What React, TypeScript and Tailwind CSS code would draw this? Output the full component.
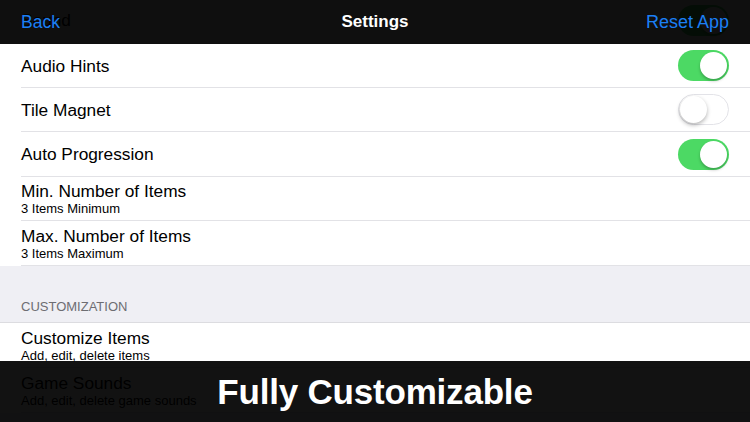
import React from "react";

type RowProps = {
  title: string;
  subtitle?: string;
  toggle?: boolean | null;
  h: string;
};

function Toggle({ on }: { on: boolean }) {
  return on ? (
    <div className="relative w-[51px] h-[31px] rounded-full bg-[#4cd964]">
      <div className="absolute right-[2px] top-[2px] w-[27px] h-[27px] rounded-full bg-white shadow-[0_2px_3px_rgba(0,0,0,0.25)]" />
    </div>
  ) : (
    <div className="relative w-[51px] h-[31px] rounded-full bg-white border-[1.5px] border-[#e3e3e8]">
      <div className="absolute left-[0.5px] top-[0.5px] w-[27px] h-[27px] rounded-full bg-white shadow-[0_2px_4px_rgba(0,0,0,0.3)]" />
    </div>
  );
}

function Row({ title, subtitle, toggle, h }: RowProps) {
  return (
    <div className={`bg-white pl-[21px] ${h}`}>
      <div className="h-full flex items-center pr-[21px] border-b border-[#e2e2e6]">
        <div className="flex-1 flex flex-col">
          <span className="text-[17.3px] leading-[20px] text-black">{title}</span>
          {subtitle && <span className="text-[13px] leading-[15px] text-black">{subtitle}</span>}
        </div>
        {toggle !== undefined && toggle !== null && <Toggle on={toggle} />}
      </div>
    </div>
  );
}

export default function App() {
  return (
    <div
      className="relative w-[750px] h-[422px] overflow-hidden bg-[#efeff4]"
      style={{ fontFamily: '"Liberation Sans", Arial, sans-serif' }}
    >
      <div className="flex flex-col -mt-[3px]">
        <Row title="Sound" toggle={true} h="h-[47px]" />
        <Row title="Audio Hints" toggle={true} h="h-[44px]" />
        <Row title="Tile Magnet" toggle={false} h="h-[44px]" />
        <Row title="Auto Progression" toggle={true} h="h-[45px]" />
        <Row title="Min. Number of Items" subtitle="3 Items Minimum" h="h-[44px]" />
        <Row title="Max. Number of Items" subtitle="3 Items Maximum" h="h-[45px]" />

        <div className="h-[57px] border-b border-[#dcdce0] flex items-end pl-[21px] pb-[7px]">
          <span className="text-[13px] text-[#6d6d72] leading-[16px]">CUSTOMIZATION</span>
        </div>

        <Row title="Customize Items" subtitle="Add, edit, delete items" h="h-[45px]" />
        <Row title="Game Sounds" subtitle="Add, edit, delete game sounds" h="h-[45px]" />
      </div>

      {/* top navigation bar */}
      <div className="absolute left-0 top-0 w-full h-[44px] bg-black/[0.94] flex items-center px-[21px]">
        <span className="relative text-[17.5px] text-[#1b7ff5]">Back</span>
        <span className="absolute left-0 right-0 text-center text-[17px] font-semibold text-white pointer-events-none">
          Settings
        </span>
        <span className="relative ml-auto text-[18px] text-[#1b7ff5]">Reset App</span>
      </div>

      {/* caption banner */}
      <div className="absolute left-0 bottom-0 w-full h-[61px] bg-black/[0.93] flex items-center justify-center">
        <span className="text-[35px] font-bold text-white leading-none tracking-[-0.2px]">Fully Customizable</span>
      </div>
    </div>
  );
}
